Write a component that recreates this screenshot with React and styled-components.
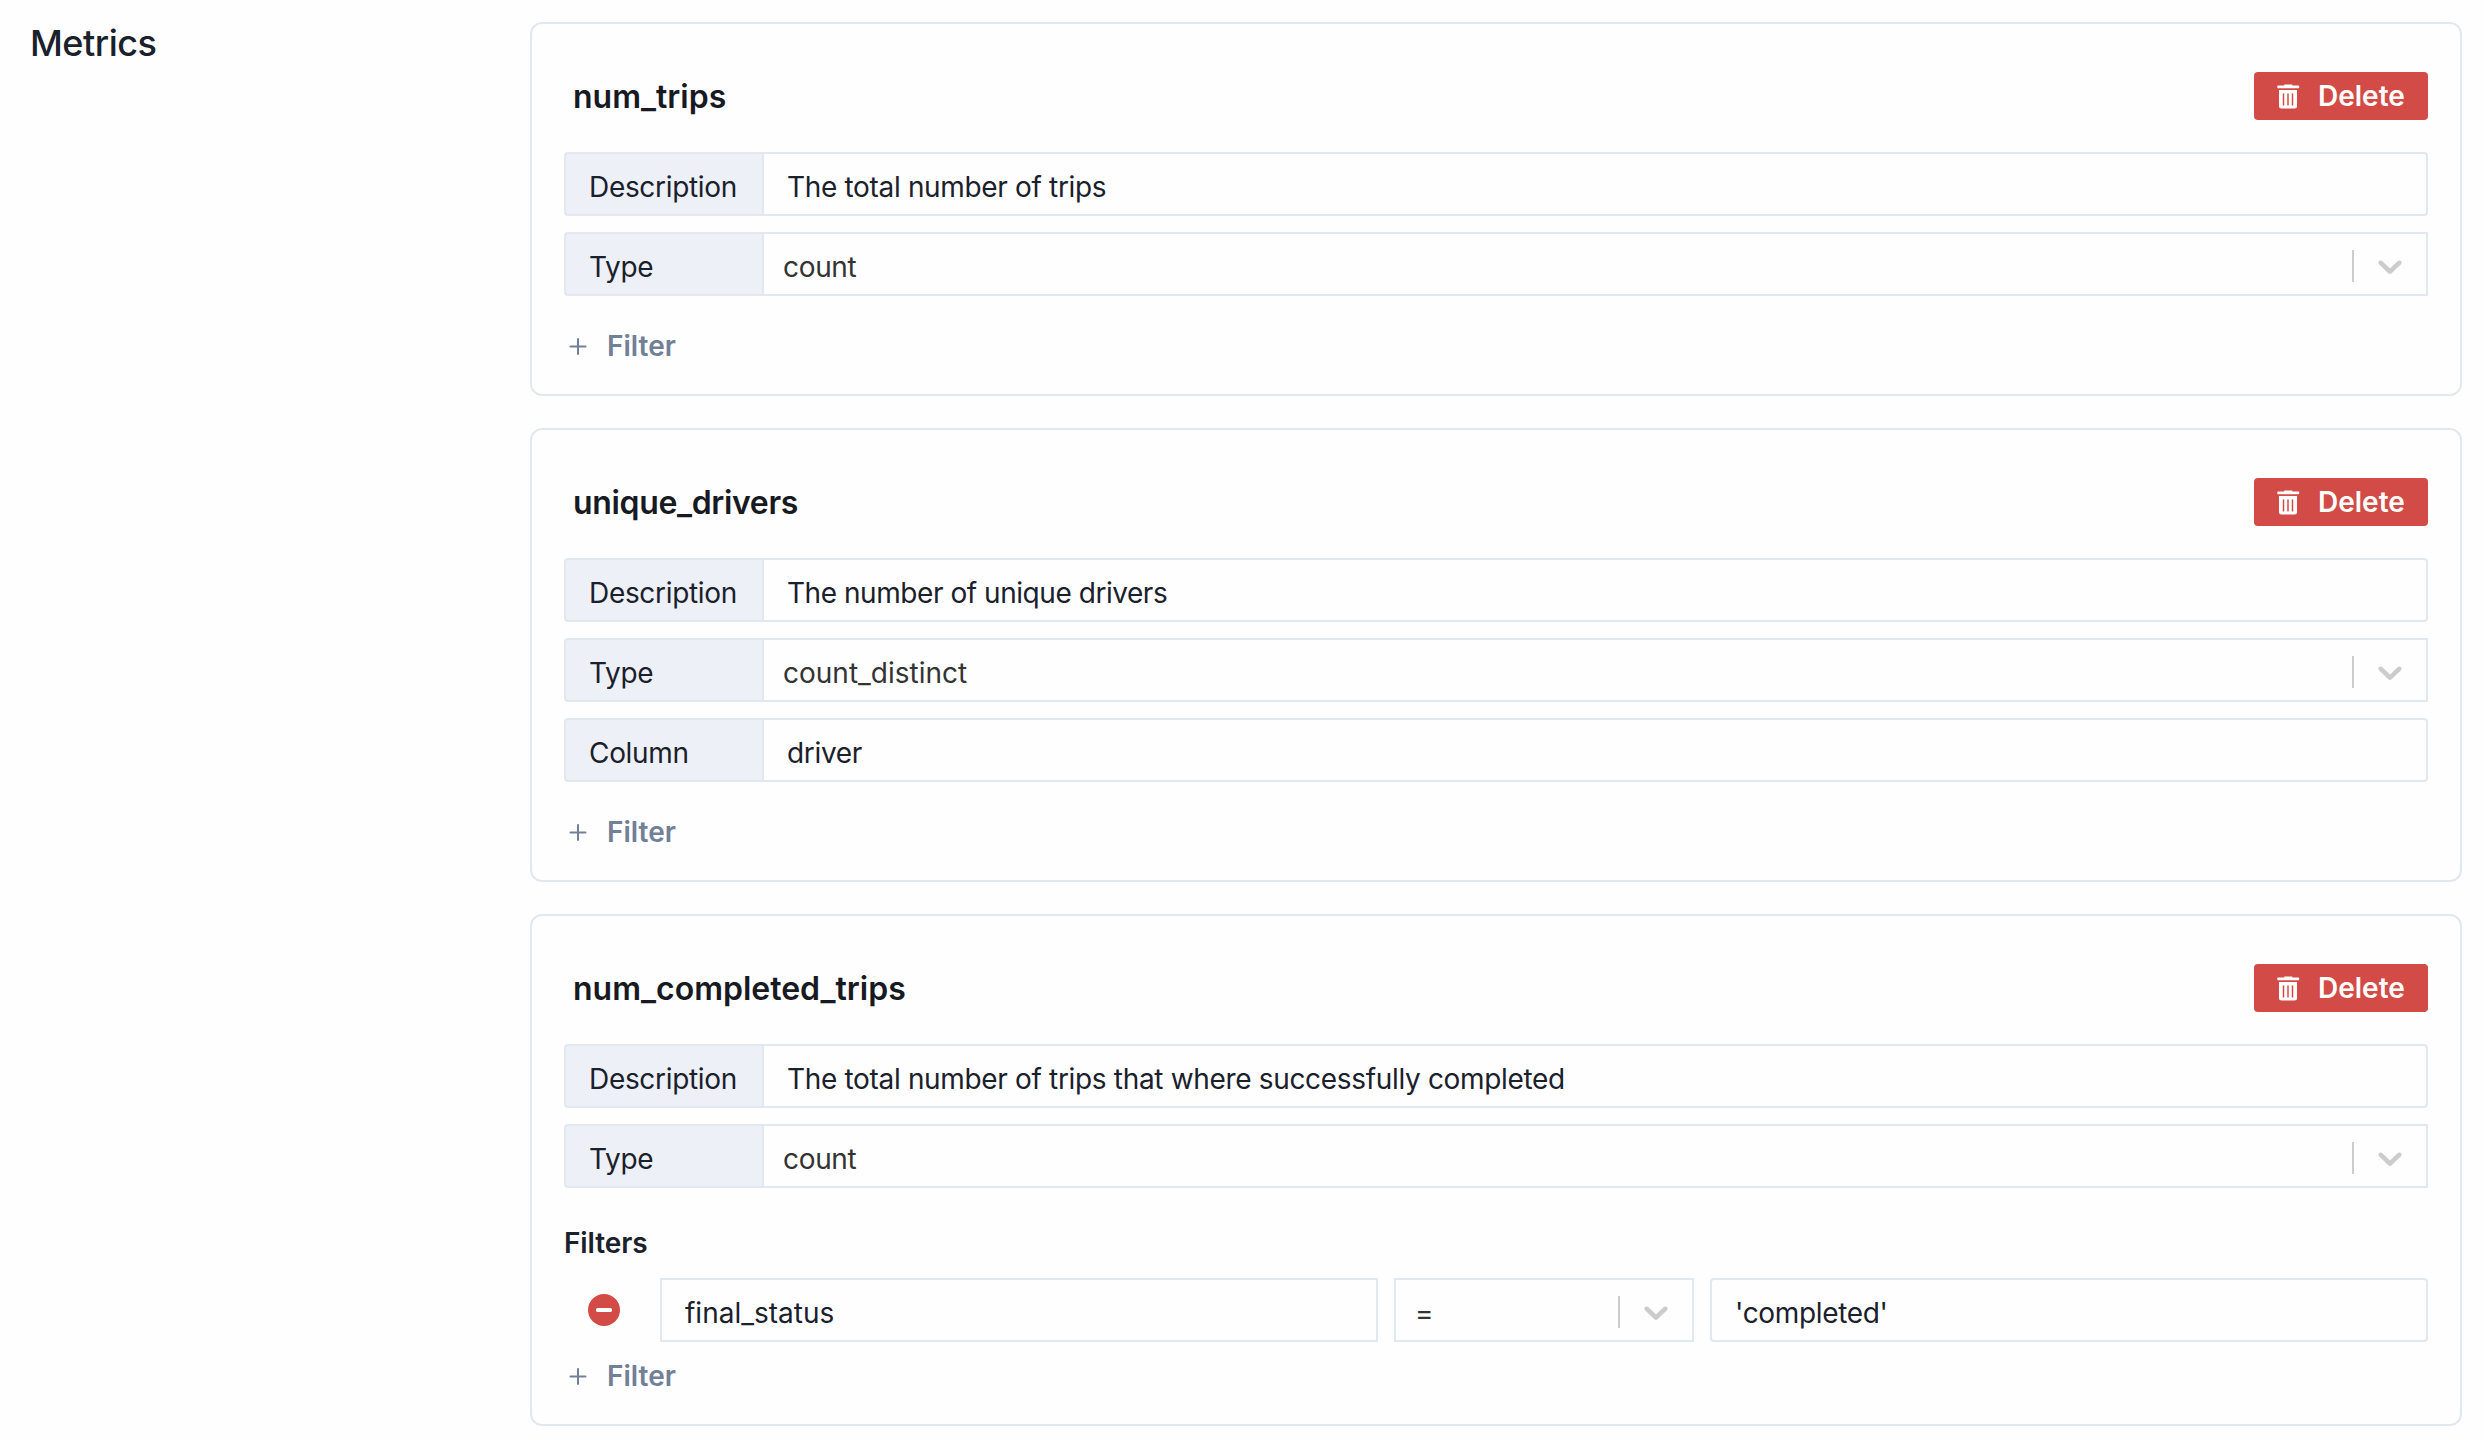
import React from "react";
import styled, { createGlobalStyle } from "styled-components";

const Global = createGlobalStyle`
  * { box-sizing: border-box; }
  body { margin: 0; background: #fefefe; font-family: Inter, "Liberation Sans", sans-serif; color: #1a202c; }
`;
const Page = styled.main`
  display: grid;
  grid-template-columns: 500px 1fr;
  height: 1440px;
  padding: 22px 22px 0 30px;
`;
const Heading = styled.h2`
  margin: 0;
  font-size: 36px;
  line-height: 43px;
  font-weight: 500;
  letter-spacing: -0.5px;
`;
const List = styled.div`
  display: flex;
  flex-direction: column;
  gap: 32px;
`;
const Card = styled.section`
  border: 2px solid #e2e8f0;
  border-radius: 12px;
  padding: 48px 32px 0;
  height: ${(p) => p.$height}px;
`;
const CardHeader = styled.header`
  display: flex;
  justify-content: space-between;
  align-items: center;
  height: 48px;
  padding-left: 9px;
  margin-bottom: 32px;
`;
const Name = styled.h3`
  margin: 0;
  color: #171923;
  font-size: 32px;
  font-weight: 600;
  letter-spacing: ${(p) => p.$tracking || 0}px;
`;
const DeleteButton = styled.button`
  display: flex;
  align-items: center;
  width: 174px;
  height: 48px;
  padding: 0 0 0 23px;
  gap: 17px;
  border: 0;
  border-radius: 4px;
  background: #d24b46;
  color: #fff;
  font: 600 28px Inter, sans-serif;
`;
const Rows = styled.div`
  display: flex;
  flex-direction: column;
  gap: 16px;
`;
const Row = styled.div`
  display: flex;
  height: 64px;
`;
const Label = styled.span`
  width: 200px;
  border: 2px solid #e2e8f0;
  border-radius: 4px 0 0 4px;
  background: #edf0f6;
  padding: 3px 0 0 23px;
  font-size: 28px;
  line-height: 60px;
  letter-spacing: -0.32px;
`;
const Field = styled.div`
  flex: ${(p) => (p.$width ? `0 0 ${p.$width}px` : "1")};
  height: 64px;
  border: 2px solid #e2e8f0;
  border-left-width: ${(p) => (p.$joined ? 0 : 2)}px;
  border-radius: ${(p) => p.$radius || "0"};
  padding: 3px 0 0 23px;
  font-size: 28px;
  line-height: 60px;
  letter-spacing: ${(p) => p.$tracking ?? -0.33}px;
`;
const Select = styled(Field)`
  display: flex;
  align-items: center;
  padding: 0 16px 0 19px;
  color: #333;
`;
const SelectValue = styled.span`
  flex: 1;
  padding-top: 5px;
`;
const Divider = styled.span`
  width: 2px;
  height: 32px;
  margin: 4px 16px 0 0;
  background: #ccc;
`;
const FilterTitle = styled.h4`
  margin: 34px 0 0;
  height: 56px;
  font-size: 28px;
  line-height: 42px;
  font-weight: 600;
  letter-spacing: -0.1px;
`;
const FilterRow = styled.div`
  display: flex;
  align-items: center;
  gap: 16px;
`;
const RemoveSlot = styled.span`
  display: flex;
  justify-content: center;
  width: 80px;
`;
const AddFilter = styled.button`
  display: flex;
  align-items: center;
  gap: 19px;
  margin-top: ${(p) => p.$top}px;
  padding: 0 0 0 4px;
  height: 48px;
  border: 0;
  background: none;
  color: #718096;
  font: 600 28px Inter, sans-serif;
`;
const ArrowIcon = styled.svg`
  display: block;
  margin-top: 3px;
`;

const Trash = () => (
  <svg width="24" height="26" viewBox="0 0 24 26">
    <path d="M8 1.500h6.500a1 1 0 0 1 1 1h6a.7.7 0 0 1 .7.7v1.300a.7.7 0 0 1-.7.7H1a.7.7 0 0 1-.7-.7v-1.300a.7.7 0 0 1 .7-.7h6a1 1 0 0 1 1-1z" fill="#fff" />
    <path d="M2 7h18v16a2.500 2.500 0 0 1-2.500 2.500h-13a2.500 2.500 0 0 1-2.500-2.500z" fill="#fff" />
    <path d="M6.500 10.500v12M11 10.500v12M15.500 10.500v12" stroke="#d24b46" strokeWidth="1.500" />
  </svg>
);
const Chevron = () => (
  <ArrowIcon width="40" height="40" viewBox="0 0 20 20" fill="#ccc">
    <path d="M4.516 7.548c0.436-0.446 1.043-0.481 1.576 0l3.908 3.747 3.908-3.747c0.533-0.481 1.141-0.446 1.574 0 0.436 0.445 0.408 1.197 0 1.615-0.406 0.418-4.695 4.502-4.695 4.502-0.217 0.223-0.502 0.335-0.787 0.335s-0.570-0.112-0.789-0.335c0 0-4.287-4.084-4.695-4.502s-0.436-1.170 0-1.615z" />
  </ArrowIcon>
);
const Plus = () => (
  <svg width="20" height="20" viewBox="0 0 20 20" stroke="#718096" strokeWidth="2" strokeLinecap="round">
    <path d="M10 3v15M2.500 10.500h15" />
  </svg>
);
const Minus = () => (
  <svg width="32" height="32" viewBox="0 0 32 32">
    <circle cx="16" cy="16" r="16" fill="#d24b46" />
    <rect x="8" y="14" width="16" height="4" rx="1.500" fill="#fff" />
  </svg>
);

const SelectBox = ({ value, ...rest }) => (
  <Select {...rest}>
    <SelectValue>{value}</SelectValue>
    <Divider />
    <Chevron />
  </Select>
);

const metrics = [
  { name: "num_trips", height: 374, description: "The total number of trips", type: "count" },
  {
    name: "unique_drivers",
    nameTracking: -0.34,
    height: 454,
    description: "The number of unique drivers",
    descriptionTracking: -0.45,
    type: "count_distinct",
    typeTracking: 0,
    column: "driver",
  },
  {
    name: "num_completed_trips",
    height: 512,
    description: "The total number of trips that where successfully completed",
    type: "count",
    filter: { field: "final_status", operator: "=", value: "'completed'" },
  },
];

const Metric = ({ name, nameTracking, height, description, descriptionTracking, type, typeTracking, column, filter }) => (
  <Card $height={height}>
    <CardHeader>
      <Name $tracking={nameTracking}>{name}</Name>
      <DeleteButton>
        <Trash />
        Delete
      </DeleteButton>
    </CardHeader>
    <Rows>
      <Row>
        <Label>Description</Label>
        <Field $joined $radius="0 4px 4px 0" $tracking={descriptionTracking}>
          {description}
        </Field>
      </Row>
      <Row>
        <Label>Type</Label>
        <SelectBox $joined $tracking={typeTracking} value={type} />
      </Row>
      {column && (
        <Row>
          <Label>Column</Label>
          <Field $joined $radius="0 4px 4px 0">{column}</Field>
        </Row>
      )}
    </Rows>
    {filter && (
      <>
        <FilterTitle>Filters</FilterTitle>
        <FilterRow>
          <RemoveSlot>
            <Minus />
          </RemoveSlot>
          <Field $tracking={0}>{filter.field}</Field>
          <SelectBox $width={300} value={filter.operator} />
          <Field $radius="4px">{filter.value}</Field>
        </FilterRow>
      </>
    )}
    <AddFilter $top={filter ? 10 : 26}>
      <Plus />
      Filter
    </AddFilter>
  </Card>
);

export default function App() {
  return (
    <>
      <Global />
      <Page>
        <Heading>Metrics</Heading>
        <List>
          {metrics.map((metric) => (
            <Metric key={metric.name} {...metric} />
          ))}
        </List>
      </Page>
    </>
  );
}
